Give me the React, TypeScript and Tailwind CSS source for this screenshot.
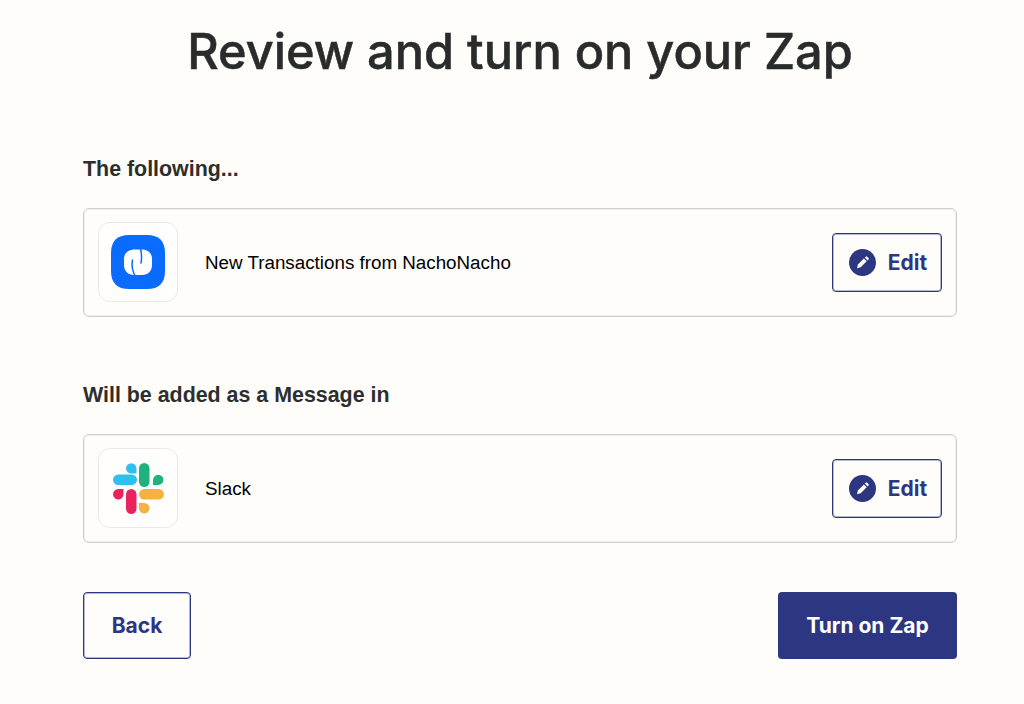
import React from 'react';

const NachoIcon = () => (
    <svg width="54" height="54" viewBox="0 0 54 54">
        <path d="M18 0H36C48 0 54 6 54 18V36C54 48 48 54 36 54H18C6 54 0 48 0 36V18C0 6 6 0 18 0Z" fill="#0a6cff" />
        <path d="M24 14.5H31C37 14.5 41 18.5 41 24V30C41 36 37 40 31 40H23C17 40 13 36 13 30V24C13 18.5 17 14.5 24 14.5Z" fill="#ffffff" />
        <path d="M29.5 13.5C30.5 18 31 23 30 28" fill="none" stroke="#0a6cff" strokeWidth="1.5" strokeLinecap="round" />
        <path d="M21.5 25C20.5 30 21.5 36 24 41" fill="none" stroke="#0a6cff" strokeWidth="1.5" strokeLinecap="round" />
    </svg>
);

const SlackIcon = () => (
    <svg width="51" height="51" viewBox="0 0 51 51">
        <rect x="0" y="11.5" width="24" height="10.5" rx="5.25" fill="#2fc0ee" />
        <path d="M13 5.5a5.25 5.25 0 0 1 10.5 0v5h-5a5.25 5.25 0 0 1-5.5-5Z" fill="#2fc0ee" />
        <rect x="26" y="0" width="10.5" height="24" rx="5.25" fill="#1fb27c" />
        <path d="M40 17a5.25 5.25 0 0 1 10.5 0 5.25 5.25 0 0 1-5.25 5h-5.25Z" fill="#1fb27c" />
        <rect x="26" y="26" width="25" height="10.5" rx="5.25" fill="#f5b23e" />
        <path d="M26 40h5.25a5.25 5.25 0 0 1 0 10.5 5.25 5.25 0 0 1-5.25-5.25Z" fill="#f5b23e" />
        <rect x="13" y="26" width="10.5" height="25" rx="5.25" fill="#e8245f" />
        <path d="M0 31.25a5.25 5.25 0 0 1 5.25-5.25h5.25v5.25a5.25 5.25 0 0 1-10.5 0Z" fill="#e8245f" />
    </svg>
);

const EditIcon = () => (
    <svg width="27" height="27" viewBox="0 0 27 27">
        <circle cx="13.5" cy="13.5" r="13.5" fill="#2d3680" />
        <path d="M8 19.2l.9-3.7 6-6 2.8 2.8-6 6Z" fill="#ffffff" />
        <path d="M15.8 8.6l.9-.9a1 1 0 0 1 1.4 0l1.4 1.4a1 1 0 0 1 0 1.4l-.9.9Z" fill="#ffffff" />
    </svg>
);

const Row = ({ icon, label }: { icon: React.ReactNode; label: string }) => (
    <div className="flex h-[109px] items-center rounded-md border border-[#d0cfca] pl-[14px] pr-[14px] shadow-[inset_0_0_0_1px_#efeeea]">
        <div className="mb-[1px] flex h-[80px] w-[80px] items-center justify-center rounded-xl border border-[#ebeae6] bg-[#fffefc]">
            {icon}
        </div>
        <span className="ml-[27px] flex-1 pt-[2px] font-['Liberation_Sans',sans-serif] text-[18.8px] text-black">{label}</span>
        <button className="flex h-[59px] w-[110px] items-center justify-center gap-[12px] rounded border border-[#2d3680] pl-[2px] font-['Inter',sans-serif] text-[21px] font-bold text-[#2d3680] shadow-[inset_0_0_0_1px_#b4b7d4]">
            <EditIcon />
            Edit
        </button>
    </div>
);

export default function App() {
    return (
        <div className="h-[704px] w-[1024px] overflow-hidden bg-[#fffdfa] pl-[83px] pr-[67px]">
            <h1 className="pt-[22px] text-center font-['Inter',sans-serif] text-[48.7px] font-medium leading-[60px] text-[#2a2b2b] [-webkit-text-stroke:0.5px_#2a2b2b]">
                Review and turn on your Zap
            </h1>

            <h2 className="mt-[72px] font-['Liberation_Sans',sans-serif] text-[21.4px] font-bold leading-[30px] text-[#2d2e2e]">The following...</h2>
            <div className="mt-[24px]">
                <Row icon={<NachoIcon />} label="New Transactions from NachoNacho" />
            </div>

            <h2 className="mt-[63px] font-['Liberation_Sans',sans-serif] text-[21.4px] font-bold leading-[30px] text-[#2d2e2e]">Will be added as a Message in</h2>
            <div className="mt-[24px]">
                <Row icon={<SlackIcon />} label="Slack" />
            </div>

            <div className="mt-[49px] flex items-center justify-between">
                <button className="h-[67px] w-[108px] rounded border border-[#2d3680] font-['Inter',sans-serif] text-[21px] font-bold text-[#2d3680] shadow-[inset_0_0_0_1px_#b4b7d4]">
                    Back
                </button>
                <button className="h-[67px] w-[179px] rounded bg-[#2d3680] font-['Inter',sans-serif] text-[21px] font-bold text-white">
                    Turn on Zap
                </button>
            </div>
        </div>
    );
}
